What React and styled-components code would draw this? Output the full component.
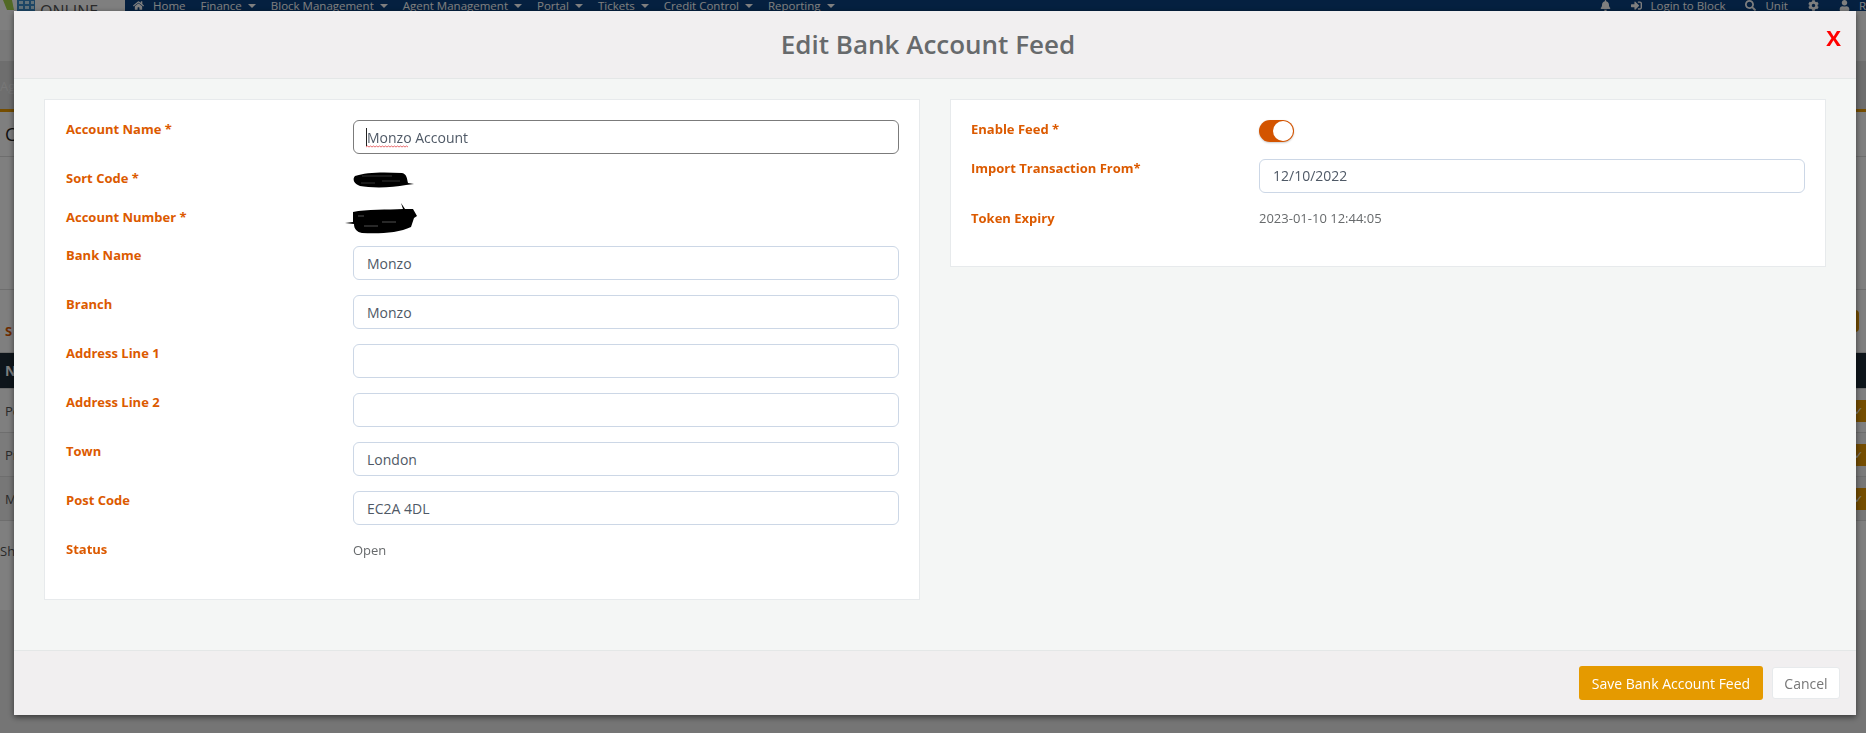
import React from "react";
import styled, { createGlobalStyle } from "styled-components";
import { FaHome, FaBell, FaSignInAlt, FaSearch, FaCog, FaUser } from "react-icons/fa";

const Global = createGlobalStyle`
  html, body { margin: 0; padding: 0; height: 100%; overflow: hidden; background: #eaeaea; }
  * { box-sizing: border-box; }
  body { font-family: "Open Sans", "Noto Sans", sans-serif; }
`;

/* ---------- page behind the dialog ---------- */
const Page = styled.div`
  height: 610px;
  background: #fff;
  display: flex;
  flex-direction: column;
  overflow: hidden;
`;
const TopBar = styled.header`
  height: 11px;
  flex: none;
  display: flex;
  overflow: hidden;
`;
const Brand = styled.div`
  width: 125px;
  flex: none;
  display: flex;
  align-items: flex-start;
  gap: 5px;
  padding-left: 3px;
  background: #fff;
`;
const BrandName = styled.span`
  font-size: 16px;
  line-height: 22px;
  color: #555;
`;
const Nav = styled.nav`
  flex: 1;
  display: flex;
  align-items: flex-start;
  justify-content: space-between;
  background: #0a4180;
  color: #fff;
  font-size: 11.5px;
  font-weight: 400;
  line-height: 10px;
`;
const NavGroup = styled.div`
  display: flex;
  align-items: center;
  gap: ${(p) => p.$gap || 15}px;
  padding-left: ${(p) => p.$pl || 0}px;
`;
const NavItem = styled.span`
  display: inline-flex;
  align-items: center;
  gap: 6px;
  white-space: nowrap;
  svg { font-size: 11px; }
`;
const Caret = styled.i`
  width: 0;
  height: 0;
  border-left: 4px solid transparent;
  border-right: 4px solid transparent;
  border-top: 4px solid #fff;
`;
const SubBand = styled.div`
  height: ${(p) => p.$h}px;
  flex: none;
  background: ${(p) => p.$bg};
  border-bottom: ${(p) => (p.$line ? `3px solid ${p.$line}` : "none")};
  font-size: 13px;
  line-height: 50px;
  color: #eee;
  white-space: nowrap;
`;
const BackRow = styled.div`
  height: ${(p) => p.$h}px;
  flex: none;
  display: flex;
  align-items: center;
  justify-content: space-between;
  padding-left: ${(p) => p.$pl ?? 5}px;
  padding-top: ${(p) => p.$pt || 0}px;
  background: ${(p) => p.$bg || "#fff"};
  border-bottom: ${(p) => (p.$bare ? "0" : "1px solid #ddd")};
  font-size: ${(p) => p.$fs || 13}px;
  font-weight: ${(p) => p.$fw || 400};
  color: ${(p) => p.$c || "#555"};
`;
const PageAction = styled.span`
  width: 22px;
  height: 22px;
  border-radius: 4px;
  background: #ea9b00;
  margin-right: ${(p) => p.$mr ?? -6}px;
  margin-bottom: ${(p) => p.$mb || 0}px;
  color: #fff;
  font-size: 11px;
  line-height: 22px;
  padding-left: 4px;
`;

const Backdrop = styled.div`
  position: fixed;
  inset: 0;
  background: rgba(0, 0, 0, 0.5);
`;

/* ---------- dialog ---------- */
const Dialog = styled.section`
  position: fixed;
  left: 14px;
  top: 11px;
  width: 1842px;
  height: 704px;
  display: flex;
  flex-direction: column;
  background: #f4f6f5;
  box-shadow: 0 2px 6px rgba(0, 0, 0, 0.55);
`;
const DialogHead = styled.div`
  position: relative;
  height: 68px;
  flex: none;
  display: flex;
  align-items: center;
  justify-content: center;
  padding: 0 14px 2px 0;
  background: #f1eff0;
  border-bottom: 1px solid #e4e7e7;
`;
const Title = styled.h2`
  margin: 0;
  font-size: 26px;
  font-weight: 600;
  color: #676a6c;
`;
const Close = styled.span`
  position: absolute;
  right: 15px;
  top: 12px;
  font-size: 22px;
  line-height: 28px;
  font-weight: 700;
  color: #ff0000;
`;
const DialogBody = styled.div`
  flex: 1;
  display: grid;
  grid-template-columns: 876px 876px;
  gap: 30px;
  align-items: start;
  padding: 20px 30px 0 30px;
`;
const Card = styled.div`
  height: ${(p) => p.$h}px;
  background: #fff;
  border: 1px solid #e7eaec;
  padding: 20px 20px 0 ${(p) => p.$pl || 20}px;
  display: flex;
  flex-direction: column;
`;
const Row = styled.div`
  height: ${(p) => p.$h || 49}px;
  flex: none;
  display: grid;
  grid-template-columns: ${(p) => p.$col || 287}px 1fr;
`;
const Label = styled.label`
  font-size: 13px;
  font-weight: 700;
  line-height: 18px;
  color: #dc5a00;
`;
const Input = styled.input`
  width: 100%;
  height: 34px;
  padding: 0 13px ${(p) => p.$pb || 0}px;
  border: 1px solid ${(p) => (p.$focus ? "#7b7b7b" : "#ccd7e6")};
  border-radius: 6px;
  background: #fff;
  font: 400 14px/20px "Open Sans", sans-serif;
  color: #4f5966;
  outline: none;
`;
const FocusWrap = styled.span`
  position: relative;
  display: block;
`;
const Caretline = styled.i`
  position: absolute;
  left: 13px;
  top: 8px;
  width: 1px;
  height: 18px;
  background: #222;
`;
const Squiggle = styled.svg`
  position: absolute;
  left: 13px;
  top: 25px;
`;
const Value = styled.span`
  font-size: 13px;
  line-height: 18px;
  padding-top: ${(p) => p.$top || 0}px;
  color: #676a6c;
`;
const Scribble = styled.svg`
  display: block;
  margin-left: ${(p) => p.$ml || 0}px;
  margin-top: ${(p) => p.$mt || 0}px;
`;
const Toggle = styled.span`
  position: relative;
  display: block;
  width: 35px;
  height: 22px;
  border-radius: 11px;
  background: #d35400;
  box-shadow: 0 1px 2px rgba(0, 0, 0, 0.2);
  &::after {
    content: "";
    position: absolute;
    right: 1px;
    top: 1px;
    width: 20px;
    height: 20px;
    border-radius: 50%;
    background: #fff;
  }
`;
const DialogFoot = styled.div`
  height: 65px;
  flex: none;
  display: flex;
  align-items: center;
  justify-content: flex-end;
  gap: 9px;
  padding-right: 16px;
  background: #f1eff0;
  border-top: 1px solid #e4e7e7;
`;
const Primary = styled.button`
  width: 184px;
  height: 34px;
  border: 0;
  border-radius: 3px;
  background: #e59a00;
  color: #fff;
  font: 500 14px "Open Sans", sans-serif;
`;
const Secondary = styled.button`
  width: 68px;
  height: 32px;
  border: 1px solid #e7eaec;
  border-radius: 3px;
  background: #fff;
  color: #777;
  font: 400 14px "Open Sans", sans-serif;
`;

const menu = ["Finance", "Block Management", "Agent Management", "Portal", "Tickets", "Credit Control", "Reporting"];

const Logo = () => (
  <svg width="32" height="22" viewBox="0 0 32 22" aria-hidden="true">
    <path d="M0 0h9l2 10H4z" fill="#a4d24a" />
    <path d="M14 0h18v22H14z" fill="#3a8ccb" />
    <path d="M16 1h4v3h-4zM22 1h4v3h-4zM28 1h3v3h-3zM16 6h4v3h-4zM22 6h4v3h-4zM28 6h3v3h-3z" fill="#c4e4f5" />
  </svg>
);

const ScribbleOne = () => (
  <Scribble width="64" height="20" viewBox="0 0 64 20" $ml={-1} $mt={1} aria-hidden="true">
    <path d="M3 6C14 2 32 2 50 3c5 1 5 6 6 10l6 1-8 1C40 18 18 18 8 16 2 14 0 9 3 6z" fill="#000" />
    <path d="M10 6h30M9 13h14M30 11h18" stroke="#555" strokeWidth=".6" fill="none" />
  </Scribble>
);
const ScribbleTwo = () => (
  <Scribble width="80" height="32" viewBox="0 0 76 32" $ml={-11} $mt={-5} aria-hidden="true">
    <path d="M9 9C22 6 44 7 59 6l-2-6 4 6 8 0 4 7-3 2-3 9C55 30 35 31 18 30c-5-1-8-4-8-9l-9-1 8-1z" fill="#000" />
    <path d="M14 13h6M20 23h14M38 19h14" stroke="#666" strokeWidth=".8" fill="none" />
  </Scribble>
);

export default function App() {
  return (
    <>
      <Global />
      <Page>
        <TopBar>
          <Brand>
            <Logo />
            <BrandName>ONLINE</BrandName>
          </Brand>
          <Nav>
            <NavGroup $pl={8}>
              <NavItem><FaHome /><span>&nbsp;Home</span></NavItem>
              {menu.map((m) => (
                <NavItem key={m}>{m}<Caret /></NavItem>
              ))}
            </NavGroup>
            <NavGroup $gap={20}>
              <NavItem><FaBell /></NavItem>
              <NavItem><FaSignInAlt />&nbsp;Login to Block</NavItem>
              <NavItem><FaSearch />&nbsp;Unit</NavItem>
              <NavItem><FaCog /></NavItem>
              <NavItem><FaUser />&nbsp;R</NavItem>
            </NavGroup>
          </Nav>
        </TopBar>
        <SubBand $h={19} $bg="#fff" />
        <SubBand $h={31} $bg="#f2f2f2" />
        <SubBand $h={51} $bg="#dcdcdc" $line="#ea9b00">Ag</SubBand>
        <BackRow $h={45} $fs={18} $c="#222">C</BackRow>
        <BackRow $h={133} $bg="#fff" />
        <BackRow $h={63} $bg="#fff" $c="#dc5a00" $fw={700} $pt={20}>S<PageAction $mr={7} $mb={20} /></BackRow>
        <BackRow $h={36} $bg="#1c2b36" $c="#fff" $fw={700} $fs={14}>N<span /></BackRow>
        <BackRow $h={44} $bg="#fff">Pe<PageAction>✓</PageAction></BackRow>
        <BackRow $h={44} $bg="#f7f7f7">Pr<PageAction>✓</PageAction></BackRow>
        <BackRow $h={44} $bg="#eee">M<PageAction>✓</PageAction></BackRow>
        <BackRow $h={60} $bg="#fff" $pl={0} $bare>Sho</BackRow>
      </Page>
      <Backdrop />
      <Dialog>
        <DialogHead>
          <Title>Edit Bank Account Feed</Title>
          <Close>X</Close>
        </DialogHead>
        <DialogBody>
          <Card $h={501} $pl={21}>
            <Row $h={49}>
              <Label>Account Name *</Label>
              <FocusWrap>
                <Input $focus defaultValue="Monzo Account" />
                <Caretline />
                <Squiggle width="44" height="3" viewBox="0 0 44 3" aria-hidden="true">
                  <path d="M0 2l1.5-1 1.5 1 1.5-1 1.5 1 1.5-1 1.5 1 1.5-1 1.5 1 1.5-1 1.5 1 1.5-1 1.5 1 1.5-1 1.5 1 1.5-1 1.5 1 1.5-1 1.5 1 1.5-1 1.5 1 1.5-1 1.5 1 1.5-1 1.5 1 1.5-1 1.5 1 1.5-1 1.5 1" fill="none" stroke="#e0474c" strokeWidth=".8" />
                </Squiggle>
              </FocusWrap>
            </Row>
            <Row $h={39}><Label>Sort Code *</Label><ScribbleOne /></Row>
            <Row $h={38}><Label>Account Number *</Label><ScribbleTwo /></Row>
            <Row><Label>Bank Name</Label><Input defaultValue="Monzo" /></Row>
            <Row><Label>Branch</Label><Input defaultValue="Monzo" /></Row>
            <Row><Label>Address Line 1</Label><Input /></Row>
            <Row><Label>Address Line 2</Label><Input /></Row>
            <Row><Label>Town</Label><Input defaultValue="London" /></Row>
            <Row><Label>Post Code</Label><Input defaultValue="EC2A 4DL" /></Row>
            <Row $h={30}><Label>Status</Label><Value $top={1}>Open</Value></Row>
          </Card>
          <Card $h={168}>
            <Row $h={39} $col={288}><Label>Enable Feed *</Label><Toggle /></Row>
            <Row $h={50} $col={288}><Label>Import Transaction From*</Label><Input $pb={2} defaultValue="12/10/2022" /></Row>
            <Row $h={30} $col={288}><Label>Token Expiry</Label><Value>2023-01-10 12:44:05</Value></Row>
          </Card>
        </DialogBody>
        <DialogFoot>
          <Primary>Save Bank Account Feed</Primary>
          <Secondary>Cancel</Secondary>
        </DialogFoot>
      </Dialog>
    </>
  );
}
